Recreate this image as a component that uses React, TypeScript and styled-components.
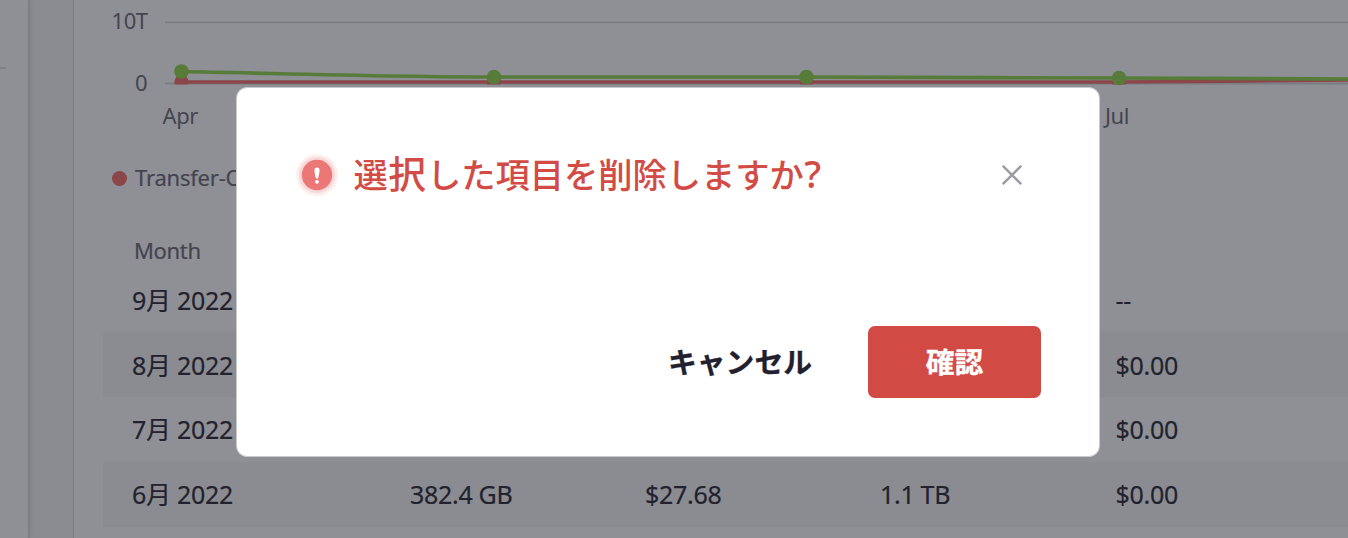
import React from "react";
import styled, { createGlobalStyle } from "styled-components";

const GlobalStyle = createGlobalStyle`
  * { box-sizing: border-box; }
  html, body { margin: 0; padding: 0; height: 100%; overflow: hidden; }
  body {
    background: #8b8c91;
    color: #22222e;
    font-family: "Noto Sans", "Noto Sans CJK JP", sans-serif;
    font-size: 24px;
  }
  button { font: inherit; border: 0; background: none; padding: 0; cursor: pointer; }
`;

const Page = styled.div`
  position: relative;
  display: flex;
  width: 1348px;
  height: 538px;
  overflow: hidden;
`;

const Sidebar = styled.aside`
  width: 30px;
  flex: none;
  padding-top: 67px;
  background: #8f9095;
  border-right: 2px solid #7e7f84;
  box-shadow: 1px 0 5px rgba(0, 0, 0, 0.06);
`;

const SidebarRule = styled.div`
  width: 6px;
  height: 2px;
  background: #7e7f84;
`;

const Panel = styled.main`
  flex: 1;
  min-width: 0;
  margin-left: 43px;
  border-left: 1px solid #7b7c81;
  background: #8f9095;
  -webkit-text-stroke: 0.2px;
`;

const Chart = styled.svg`
  display: block;
  width: 1274px;
  height: 140px;
  font-size: 22px;
  letter-spacing: -0.4px;
  fill: #444450;
`;

const Legend = styled.div`
  display: flex;
  align-items: center;
  gap: 8px;
  height: 73px;
  padding-left: 38px;
  font-size: 22px;
  letter-spacing: -0.2px;
  color: #444450;
  white-space: nowrap;
`;

const LegendDot = styled.span`
  width: 15px;
  height: 15px;
  margin-top: 3px;
  border-radius: 50%;
  background: #8b4649;
`;

const Table = styled.div`
  margin-left: 29px;
`;

const TableHead = styled.div`
  height: 54px;
  padding: 22px 0 0 31px;
  font-size: 22px;
  letter-spacing: -0.35px;
  line-height: 30px;
  color: #444450;
`;

const Row = styled.div<{ $striped?: boolean }>`
  display: grid;
  grid-template-columns: 278px 235px 235px 235.5px 1fr;
  align-items: baseline;
  height: 65px;
  padding: 14px 0 0 29px;
  font-size: 25px;
  letter-spacing: -0.3px;
  line-height: 36px;
  white-space: nowrap;
  background: ${(p) => (p.$striped ? "#8b8c91" : "transparent")};

  &:nth-child(-n + 3) {
    padding-top: 15px;
  }
`;

const Overlay = styled.div`
  position: absolute;
  inset: 0;
  display: flex;
  justify-content: center;
  align-items: flex-start;
  padding: 87px 12px 0 0;
`;

const Dialog = styled.section`
  display: flex;
  flex-direction: column;
  justify-content: space-between;
  width: 864px;
  height: 370px;
  padding: 56px 58px 58px 59px;
  border: 1px solid #c9c9cc;
  border-radius: 11px;
  background: #fff;
`;

const DialogHeader = styled.header`
  display: flex;
  align-items: center;
  height: 61px;
`;

const Title = styled.h2`
  flex: 1;
  margin: 0 0 0 15.4px;
  padding-top: 1px;
  font-size: 34.25px;
  font-weight: 500;
  line-height: 58px;
  color: #d24b45;
  white-space: nowrap;
`;

const WideGlyph = styled.span`
  margin: 0 1px 0 0.6px;
  font-size: 37.7px;
  line-height: 1;
`;

const CloseButton = styled.button`
  display: flex;
  margin-right: 19.5px;
`;

const DialogFooter = styled.footer`
  display: flex;
  justify-content: flex-end;
  align-items: center;
  gap: 56px;
`;

const Action = styled.button<{ $primary?: boolean }>`
  && {
    width: ${(p) => (p.$primary ? "173px" : "auto")};
    height: 72px;
    padding-bottom: 4px;
    border-radius: 7px;
    background: ${(p) => (p.$primary ? "#d14a44" : "transparent")};
    color: ${(p) => (p.$primary ? "#fff" : "#21202e")};
    font-size: 28.8px;
    font-weight: 700;
    -webkit-text-stroke: 0.3px;
  }
`;

const POINTS = [
  [107.5, 71.5],
  [420, 77],
  [732.5, 77],
  [1045, 78],
];

const ROWS = [
  ["9月 2022", "", "", "", "--"],
  ["8月 2022", "", "", "", "$0.00"],
  ["7月 2022", "", "", "", "$0.00"],
  ["6月 2022", "382.4 GB", "$27.68", "1.1 TB", "$0.00"],
];

function UsageChart() {
  return (
    <Chart viewBox="0 0 1274 140">
      <path d="M91 22.3H1274M91 83.5H1274" stroke="#7c7d82" strokeWidth="1.8" />
      <text x="73.7" y="29" textAnchor="end">10T</text>
      <text x="73.2" y="91" textAnchor="end">0</text>
      <text x="88.5" y="124">Apr</text>
      <text x="1031" y="124">Jul</text>
      <clipPath id="plot">
        <rect x="91" y="0" width="1183" height="84.6" />
      </clipPath>
      <g clipPath="url(#plot)">
        {POINTS.map(([x]) => (
          <circle key={x} cx={x} cy="82" r="7.2" fill="#8b4649" />
        ))}
        <path d="M107.5 82H1045C1120 82 1200 80.5 1274 80" fill="none" stroke="#8b4649" strokeWidth="3.6" />
      </g>
      <path
        d="M107.5 71.5C210 73.5 316 77 420 77H732.5C840 77 940 78 1045 78L1274 79"
        fill="none"
        stroke="#577c3a"
        strokeWidth="3.6"
      />
      {POINTS.map(([x, y]) => (
        <circle key={x} cx={x} cy={y} r="7.3" fill="#577c3a" />
      ))}
    </Chart>
  );
}

function AlertIcon() {
  return (
    <svg width="42" height="42" viewBox="0 0 42 42">
      <circle cx="21" cy="21" r="20.8" fill="#fdeeee" />
      <circle cx="21" cy="21" r="18" fill="#f8d8d8" />
      <circle cx="21" cy="21" r="15.2" fill="#ec7777" />
      <path d="M21 13.4c1.7 0 2.7 1.2 2.6 2.9-.1 2.5-1 6.5-1.6 8.1h-2c-.6-1.6-1.5-5.6-1.6-8.1-.1-1.7.9-2.9 2.6-2.9Z" fill="#fff" />
      <circle cx="21" cy="27.8" r="1.9" fill="#fff" />
    </svg>
  );
}

export default function App() {
  return (
    <>
      <GlobalStyle />
      <Page>
        <Sidebar>
          <SidebarRule />
        </Sidebar>
        <Panel>
          <UsageChart />
          <Legend>
            <LegendDot />
            Transfer-Out
          </Legend>
          <Table>
            <TableHead>Month</TableHead>
            {ROWS.map((cells, i) => (
              <Row key={cells[0]} $striped={i % 2 === 1}>
                {cells.map((cell, c) => (
                  <span key={c}>{cell}</span>
                ))}
              </Row>
            ))}
          </Table>
        </Panel>
        <Overlay>
          <Dialog role="dialog">
            <DialogHeader>
              <AlertIcon />
              <Title>
                選<WideGlyph>択</WideGlyph>した項目を削除しますか<WideGlyph>?</WideGlyph>
              </Title>
              <CloseButton aria-label="閉じる">
                <svg width="20" height="20" viewBox="0 0 20 20">
                  <path d="M.8.8 19.2 19.2M19.2.8.8 19.2" stroke="#9a9aa2" strokeWidth="2.3" />
                </svg>
              </CloseButton>
            </DialogHeader>
            <DialogFooter>
              <Action>キャンセル</Action>
              <Action $primary>確認</Action>
            </DialogFooter>
          </Dialog>
        </Overlay>
      </Page>
    </>
  );
}
